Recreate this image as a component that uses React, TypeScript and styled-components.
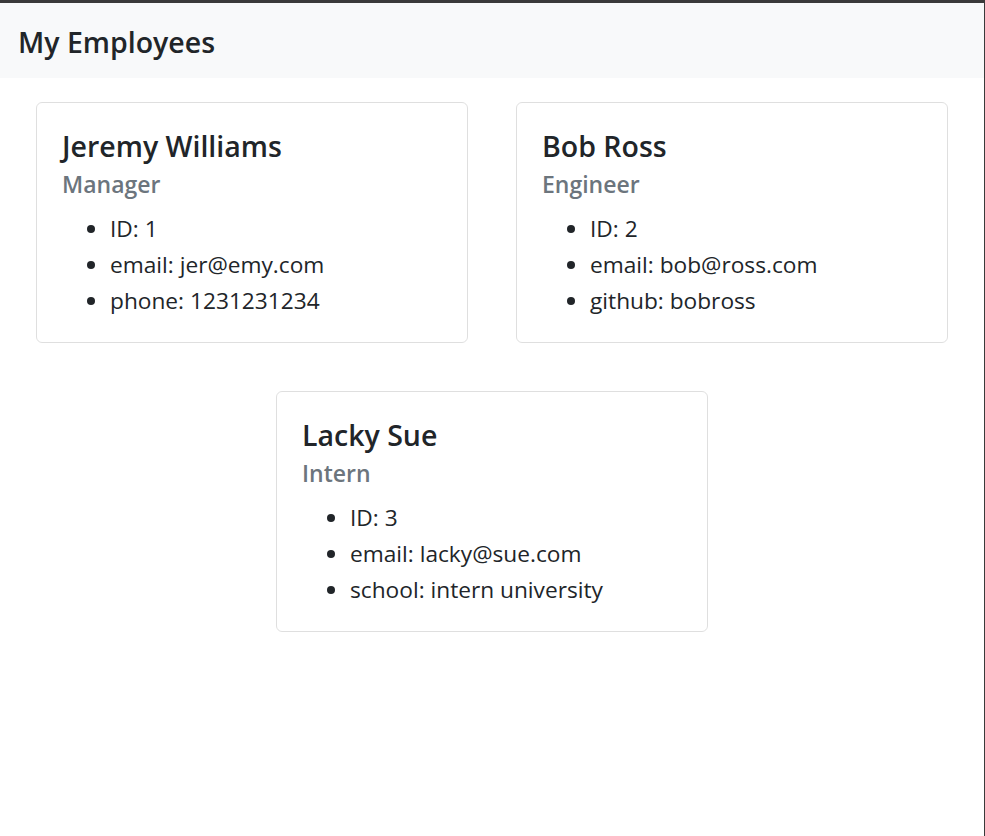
import styled, { createGlobalStyle } from "styled-components";

const GlobalStyle = createGlobalStyle`
  html, body {
    margin: 0;
    padding: 0;
  }
  body {
    font-family: "Open Sans", "Noto Sans", sans-serif;
    color: #212529;
    background: #fff;
  }
`;

const Frame = styled.div`
  min-height: 836px;
  box-sizing: border-box;
  border-top: 3px solid #3a3a3a;
  border-right: 1px solid #3a3a3a;
`;

const NavBar = styled.nav`
  background-color: #f8f9fa;
  height: 75px;
  display: flex;
  align-items: center;
  padding: 3px 18px 0;
  box-sizing: border-box;
`;

const Brand = styled.h1`
  margin: 0;
  font-size: 28.5px;
  font-weight: 550;
  line-height: 1.2;
`;

const CardGrid = styled.main`
  display: flex;
  flex-wrap: wrap;
  justify-content: center;
  gap: 48px 48px;
  padding: 24px 0 0;
`;

const Card = styled.section`
  width: 432px;
  box-sizing: border-box;
  border: 1px solid rgba(0, 0, 0, 0.125);
  border-radius: 6px;
  padding: 25px 24px 23px 25px;
`;

const Name = styled.h5`
  margin: 0 0 12px;
  font-size: 28.5px;
  font-weight: 550;
  line-height: 36px;
`;

const Role = styled.h6`
  margin: -6px 0 12px;
  font-size: 23px;
  font-weight: 600;
  line-height: 29px;
  color: #6c757d;
`;

const Details = styled.ul`
  margin: 0;
  padding-left: 48px;
  font-size: 22.7px;
  line-height: 36px;
`;

type Employee = {
  name: string;
  role: string;
  id: number;
  email: string;
  extra: [string, string];
};

const employees: Employee[] = [
  { name: "Jeremy Williams", role: "Manager", id: 1, email: "jer@emy.com", extra: ["phone", "1231231234"] },
  { name: "Bob Ross", role: "Engineer", id: 2, email: "bob@ross.com", extra: ["github", "bobross"] },
  { name: "Lacky Sue", role: "Intern", id: 3, email: "lacky@sue.com", extra: ["school", "intern university"] },
];

function EmployeeCard({ emp }: { emp: Employee }) {
  return (
    <Card>
      <Name>{emp.name}</Name>
      <Role>{emp.role}</Role>
      <Details>
        <li>ID: {emp.id}</li>
        <li>email: {emp.email}</li>
        <li>
          {emp.extra[0]}: {emp.extra[1]}
        </li>
      </Details>
    </Card>
  );
}

export default function App() {
  return (
    <>
      <GlobalStyle />
      <Frame>
        <NavBar>
          <Brand>My Employees</Brand>
        </NavBar>
        <CardGrid>
          {employees.map((emp) => (
            <EmployeeCard key={emp.id} emp={emp} />
          ))}
        </CardGrid>
      </Frame>
    </>
  );
}
